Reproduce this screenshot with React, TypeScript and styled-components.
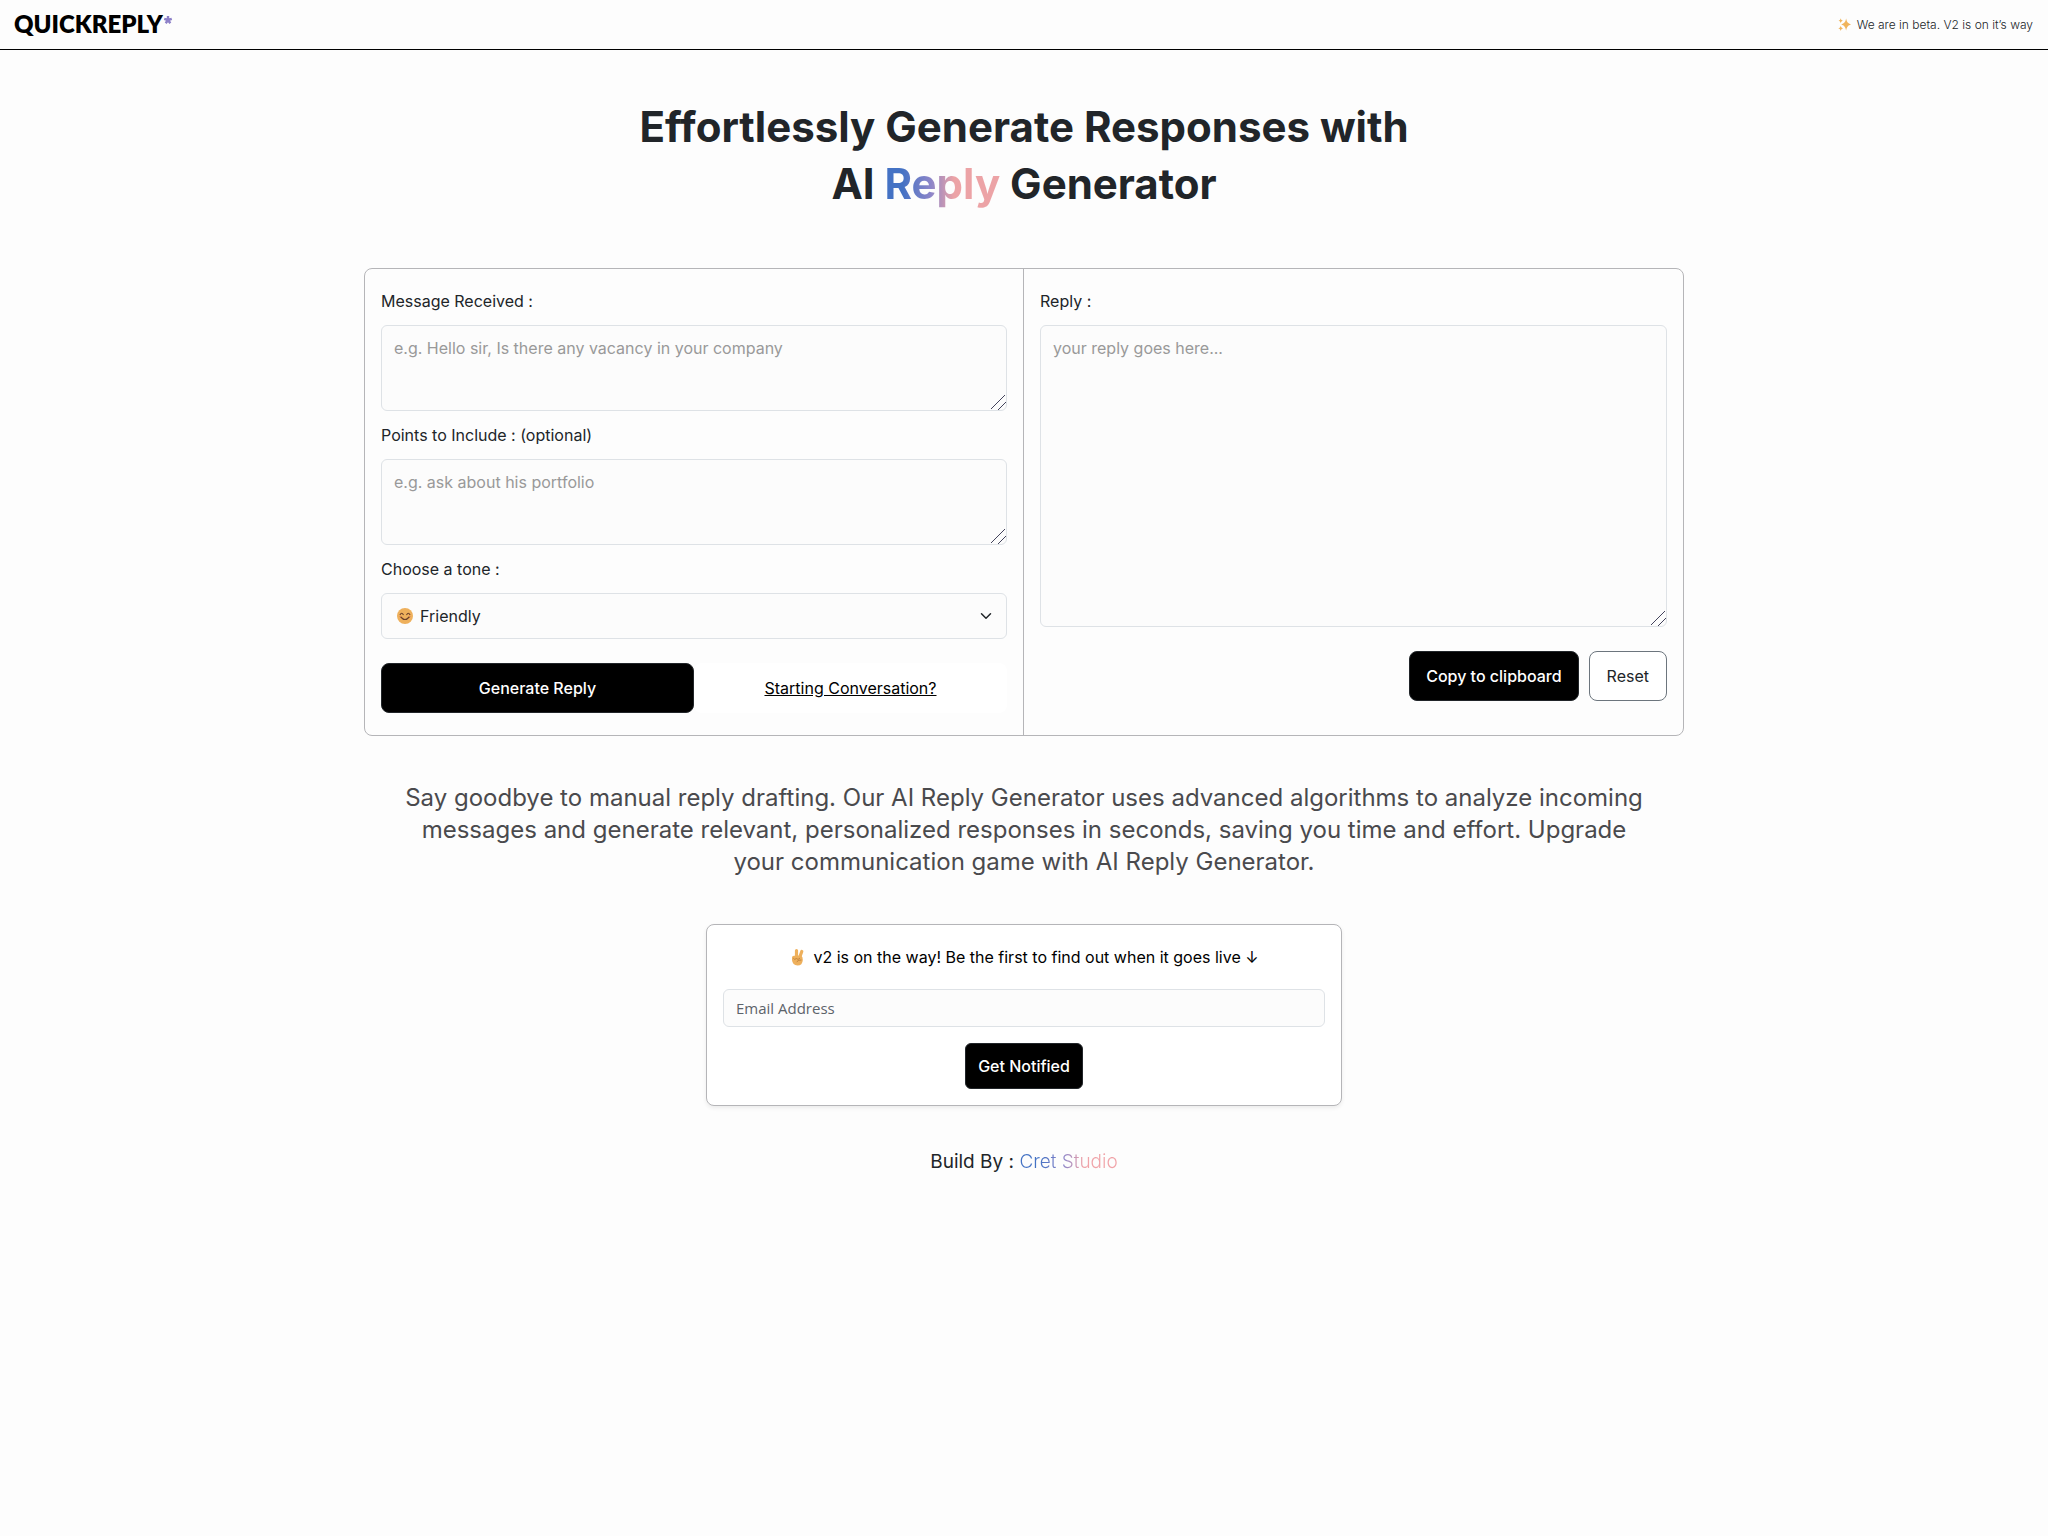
import React from "react";
import styled, { createGlobalStyle } from "styled-components";

const GlobalStyle = createGlobalStyle`
  *, *::before, *::after { box-sizing: border-box; }
  body {
    margin: 0;
    background: #fdfdfd;
    color: #212529;
    font-family: Inter, "Liberation Sans", sans-serif;
    font-size: 16px;
    line-height: 24px;
  }
`;

const Header = styled.header`
  display: flex;
  align-items: center;
  justify-content: space-between;
  height: 50px;
  padding: 0 15px 2px 14px;
  border-bottom: 1px solid #000;
`;

const Logo = styled.a`
  display: flex;
  align-items: flex-start;
  color: #000;
  font-family: Lato, "Liberation Sans", sans-serif;
  font-size: 24px;
  font-weight: 800;
  line-height: 24px;
  text-decoration: none;
`;

const LogoMark = styled.svg`
  width: 10px;
  height: 10px;
  margin-top: 3px;
`;

const BetaNote = styled.p`
  display: flex;
  align-items: center;
  gap: 6px;
  margin: 2px 0 0;
  font-size: 12px;
  font-weight: 300;
`;

const Glyph = styled.svg<{ $size: number }>`
  flex: none;
  width: ${(p) => p.$size}px;
  height: ${(p) => p.$size}px;
`;

const Main = styled.main`
  display: flex;
  flex-direction: column;
  align-items: center;
  padding: 48px 12px 0;
`;

const Title = styled.h1`
  margin: 0;
  font-size: 42px;
  font-weight: 700;
  line-height: 57px;
  text-align: center;
`;

const Gradient = styled.span`
  background: linear-gradient(90deg, #4472c4 15%, #8d86c9 40%, #eca3a6 60%);
  background-clip: text;
  color: transparent;
`;

const Panel = styled.section`
  display: grid;
  grid-template-columns: 1fr 1fr;
  width: 100%;
  max-width: 1320px;
  margin-top: 56px;
  border: 1px solid #b5b5b8;
  border-radius: 8px;
`;

const Column = styled.form`
  display: flex;
  flex-direction: column;
  padding: 20px 16px 22px;

  &:first-child {
    border-right: 1px solid #b5b5b8;
  }
`;

const Label = styled.label`
  margin-bottom: 12px;
`;

const TextArea = styled.textarea<{ $height: number }>`
  display: block;
  width: 100%;
  height: ${(p) => p.$height}px;
  margin-bottom: 12px;
  padding: 10px 12px;
  border: 1px solid #dee2e6;
  border-radius: 6px;
  background: #fcfcfc;
  color: #212529;
  font: inherit;
  resize: vertical;

  &::placeholder {
    color: #999;
    opacity: 1;
  }

  &::-webkit-resizer {
    background:
      linear-gradient(135deg, transparent 45%, #44445c 46%, #44445c 49%, transparent 50%, transparent 70%, #44445c 71%, #44445c 74%, transparent 75%);
  }
`;

const SelectWrap = styled.div`
  position: relative;
`;

const Select = styled.select`
  appearance: none;
  display: block;
  width: 100%;
  height: 46px;
  padding: 0 38px;
  border: 1px solid #dee2e6;
  border-radius: 6px;
  background: #fcfcfc;
  color: #212529;
  font: inherit;
`;

const SelectEmoji = styled.span`
  position: absolute;
  left: 16px;
  top: 15px;
  display: flex;
  pointer-events: none;
`;

const SelectArrow = styled.span`
  position: absolute;
  right: 15px;
  top: 17px;
  display: flex;
  pointer-events: none;
`;

const Actions = styled.div<{ $end?: boolean }>`
  display: flex;
  justify-content: ${(p) => (p.$end ? "flex-end" : "stretch")};
  gap: ${(p) => (p.$end ? 10 : 0)}px;
  margin-top: ${(p) => (p.$end ? 12 : 24)}px;
`;

const Button = styled.button<{ $kind: "solid" | "outline" | "link"; $grow?: boolean }>`
  flex: ${(p) => (p.$grow ? "1 1 0" : "none")};
  height: 50px;
  padding: 0 ${(p) => (p.$kind === "outline" ? 17 : 16)}px;
  border: 1px solid ${(p) => ({ solid: "#212529", outline: "#6c757d", link: "transparent" })[p.$kind]};
  border-radius: 8px;
  background: ${(p) => (p.$kind === "solid" ? "#000" : "#fff")};
  color: ${(p) => ({ solid: "#fff", outline: "#212529", link: "#000" })[p.$kind]};
  font: inherit;
  font-weight: ${(p) => (p.$kind === "solid" ? 500 : 400)};
  text-decoration: ${(p) => (p.$kind === "link" ? "underline" : "none")};
`;

const Lead = styled.p`
  width: 100%;
  max-width: 1250px;
  margin: 46px 0 0;
  color: #4a4a4d;
  font-size: 24px;
  line-height: 32px;
  text-align: center;
`;

const NotifyCard = styled.form`
  display: flex;
  flex-direction: column;
  align-items: center;
  width: 100%;
  max-width: 636px;
  margin-top: 46px;
  padding: 20px 16px 16px;
  border: 1px solid #b5b5b8;
  border-radius: 8px;
  background: #fff;
  box-shadow: 0 2px 4px rgba(0, 0, 0, 0.075);
`;

const NotifyLabel = styled.label`
  display: flex;
  align-items: center;
  gap: 6px;
  color: #000;
`;

const EmailInput = styled.input`
  width: 100%;
  height: 38px;
  margin: 20px 0 16px;
  padding: 0 12px;
  border: 1px solid #dee2e6;
  border-radius: 6px;
  background: #fcfcfc;
  font-family: "Open Sans", "Noto Sans", sans-serif;
  font-size: 15px;

  &::placeholder {
    color: #5c636a;
    opacity: 1;
  }
`;

const NotifyButton = styled(Button)`
  height: 46px;
  padding: 0 12px;
  border-radius: 6px;
`;

const Footer = styled.footer`
  margin-top: 42px;
  font-size: 19px;
  line-height: 27px;
`;

const StudioLink = styled.a`
  background: linear-gradient(90deg, #4472c4 20%, #8d86c9 45%, #f0a3a8 65%);
  background-clip: text;
  color: transparent;
  font-weight: 300;
  text-decoration: none;
`;

const Sparkles = () => (
  <Glyph $size={13} viewBox="0 0 24 24" fill="#f0b45c" aria-hidden="true">
    <path d="M15 1C16.500 8 18.500 10 24 12C18.500 14 16.500 16 15 23C13.500 16 11.500 14 6 12C11.500 10 13.500 8 15 1Z" />
    <path d="M5 0.500C5.800 3.500 6.500 4.200 9 5C6.500 5.800 5.800 6.500 5 9.500C4.200 6.500 3.500 5.800 1 5C3.500 4.200 4.200 3.500 5 0.500Z" />
    <path d="M5 14.500C5.800 17.800 6.500 18.600 9.500 19.500C6.500 20.400 5.800 21 5 24C4.200 21 3.500 20.400 0.500 19.500C3.500 18.600 4.200 17.800 5 14.500Z" />
  </Glyph>
);

const Smile = () => (
  <Glyph $size={16} viewBox="0 0 16 16" fill="none" aria-hidden="true">
    <circle cx="8" cy="8" r="8" fill="#eeb05c" />
    <path d="M3.200 6.500Q4.700 4 6.200 6.500M9.800 6.500Q11.300 4 12.800 6.500M3.800 9Q8 14 12.200 9" stroke="#6b3f2a" strokeWidth="1.200" strokeLinecap="round" />
    <path d="M2.500 8.500h1.500M12 8.500h1.500" stroke="#e27b52" strokeWidth="1.200" />
  </Glyph>
);

const VictoryHand = () => (
  <Glyph $size={18} viewBox="0 0 18 18" fill="none" aria-hidden="true">
    <path d="M7.500 9L7.500 2.500M10.800 9L12.800 3.500" stroke="#eeb05c" strokeWidth="3.200" strokeLinecap="round" />
    <path d="M3 9.500Q3 7.500 5.500 7.800L12 7.500Q14 8.500 13.800 12Q13.500 17.500 8.500 17.500Q3.500 17.300 3 12Z" fill="#eeb05c" />
    <path d="M4.500 10.500Q5.800 12.500 7.300 10.500Q9 12.500 10.800 10.300M8 13.500Q9.500 11.500 12 12" stroke="#b87835" strokeWidth="0.800" strokeLinecap="round" />
  </Glyph>
);

export default function App() {
  return (
    <>
      <GlobalStyle />
      <Header>
        <Logo href="#">
          QUICKREPLY
          <LogoMark viewBox="0 0 10 10" aria-hidden="true">
            <path d="M5 5V1M5 5L1.200 3.800M5 5L8.800 3.800M5 5L2.700 8.300M5 5L7.300 8.300" stroke="#8d80c8" strokeWidth="2.400" />
          </LogoMark>
        </Logo>
        <BetaNote>
          <Sparkles />
          We are in beta. V2 is on it’s way
        </BetaNote>
      </Header>
      <Main>
        <Title>
          Effortlessly Generate Responses with
          <br />
          AI <Gradient>Reply</Gradient> Generator
        </Title>
        <Panel>
          <Column>
            <Label htmlFor="message">Message Received :</Label>
            <TextArea id="message" $height={86} placeholder="e.g. Hello sir, Is there any vacancy in your company" />
            <Label htmlFor="points">Points to Include : (optional)</Label>
            <TextArea id="points" $height={86} placeholder="e.g. ask about his portfolio" />
            <Label htmlFor="tone">Choose a tone :</Label>
            <SelectWrap>
              <Select id="tone" defaultValue="friendly">
                <option value="friendly">Friendly</option>
              </Select>
              <SelectEmoji><Smile /></SelectEmoji>
              <SelectArrow>
                <Glyph $size={12} viewBox="0 0 16 16" fill="none" stroke="#212529" strokeWidth="2" strokeLinecap="round" strokeLinejoin="round" aria-hidden="true">
                  <path d="m2 5 6 6 6-6" />
                </Glyph>
              </SelectArrow>
            </SelectWrap>
            <Actions>
              <Button type="button" $kind="solid" $grow>Generate Reply</Button>
              <Button type="button" $kind="link" $grow>Starting Conversation?</Button>
            </Actions>
          </Column>
          <Column>
            <Label htmlFor="reply">Reply :</Label>
            <TextArea id="reply" $height={302} placeholder="your reply goes here..." />
            <Actions $end>
              <Button type="button" $kind="solid">Copy to clipboard</Button>
              <Button type="reset" $kind="outline">Reset</Button>
            </Actions>
          </Column>
        </Panel>
        <Lead>
          Say goodbye to manual reply drafting. Our AI Reply Generator uses advanced algorithms to analyze incoming
          messages and generate relevant, personalized responses in seconds, saving you time and effort. Upgrade your
          communication game with AI Reply Generator.
        </Lead>
        <NotifyCard>
          <NotifyLabel htmlFor="email">
            <VictoryHand />
            v2 is on the way! Be the first to find out when it goes live ↓
          </NotifyLabel>
          <EmailInput id="email" type="email" placeholder="Email Address" />
          <NotifyButton type="button" $kind="solid">Get Notified</NotifyButton>
        </NotifyCard>
        <Footer>
          Build By : <StudioLink href="#">Cret Studio</StudioLink>
        </Footer>
      </Main>
    </>
  );
}
